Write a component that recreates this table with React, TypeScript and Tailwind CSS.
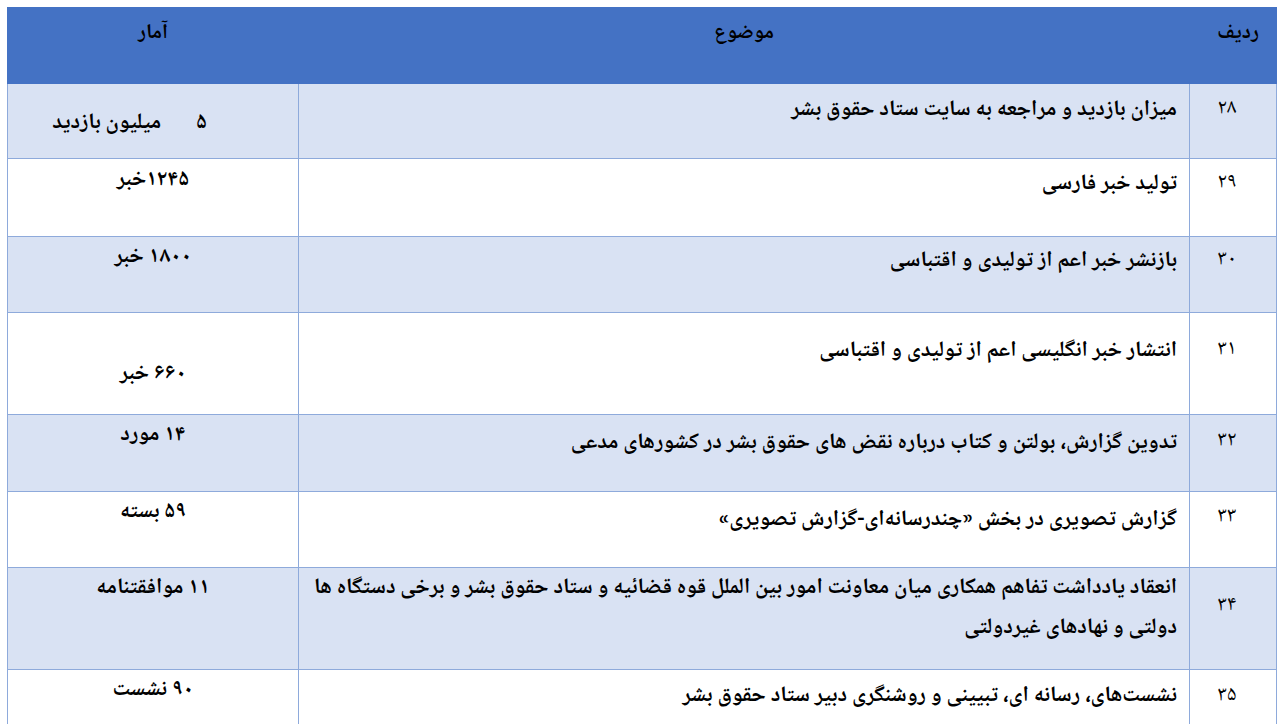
const font = "font-['B_Nazanin','Noto_Naskh_Arabic','Noto_Sans_Arabic','DejaVu_Sans',sans-serif]"

interface Row {
  num: string
  topic: string[]
  stat: string
  h: string
  topicPt: string
  numPt: string
  statPt: string
  shade: boolean
}

const rows: Row[] = [
  { num: '۲۸', topic: ['میزان بازدید و مراجعه به سایت ستاد حقوق بشر'], stat: '', h: 'h-[75px]', topicPt: 'pt-[6px]', numPt: 'pt-[5px]', statPt: 'pt-[19px]', shade: true },
  { num: '۲۹', topic: ['تولید خبر فارسی'], stat: '۱۲۴۵خبر', h: 'h-[78px]', topicPt: 'pt-[5px]', numPt: 'pt-[4px]', statPt: 'pt-[1px]', shade: false },
  { num: '۳۰', topic: ['بازنشر خبر اعم از تولیدی و اقتباسی'], stat: '۱۸۰۰ خبر', h: 'h-[76px]', topicPt: 'pt-[4px]', numPt: 'pt-[3px]', statPt: 'pt-0', shade: true },
  { num: '۳۱', topic: ['انتشار خبر انگلیسی اعم از تولیدی و اقتباسی'], stat: '۶۶۰ خبر', h: 'h-[102px]', topicPt: 'pt-[18px]', numPt: 'pt-[17px]', statPt: 'pt-[41px]', shade: false },
  { num: '۳۲', topic: ['تدوین گزارش، بولتن و کتاب درباره نقض های حقوق بشر در کشورهای مدعی'], stat: '۱۴ مورد', h: 'h-[77px]', topicPt: 'pt-[8px]', numPt: 'pt-[6px]', statPt: 'pt-0', shade: true },
  { num: '۳۳', topic: ['گزارش تصویری در بخش «چندرسانه‌ای-گزارش تصویری»'], stat: '۵۹ بسته', h: 'h-[76px]', topicPt: 'pt-[8px]', numPt: 'pt-[5px]', statPt: 'pt-0', shade: false },
  {
    num: '۳۴',
    topic: ['انعقاد یادداشت تفاهم همکاری میان معاونت امور بین الملل قوه قضائیه و ستاد حقوق بشر و برخی دستگاه ها', 'دولتی و نهادهای غیردولتی'],
    stat: '۱۱ موافقتنامه',
    h: 'h-[102px]',
    topicPt: 'pt-0',
    numPt: 'pt-[18px]',
    statPt: 'pt-0',
    shade: true,
  },
  { num: '۳۵', topic: ['نشست‌های، رسانه ای، تبیینی و روشنگری دبیر ستاد حقوق بشر'], stat: '۹۰ نشست', h: 'h-[80px]', topicPt: 'pt-[6px]', numPt: 'pt-[6px]', statPt: 'pt-0', shade: false },
]

const App: React.FC = () => {
  return (
    <div className={`min-h-screen bg-white pt-[7px] pl-[8px] pr-[6px] text-black ${font}`} dir="rtl">
      <table className="w-[1269px] border-collapse table-fixed">
        <colgroup>
          <col className="w-[87px]" />
          <col className="w-[891px]" />
          <col className="w-[291px]" />
        </colgroup>
        <thead>
          <tr className="h-[76px] bg-[#4472C4]">
            <th className="align-top pt-[6px] pl-[10px] text-center text-[21px] font-bold leading-[40px] border border-[#4472C4]">ردیف</th>
            <th className="align-top pt-[6px] text-center text-[21px] font-bold leading-[40px] border border-[#4472C4]">موضوع</th>
            <th className="align-top pt-[6px] text-center text-[21px] font-bold leading-[40px] border border-[#4472C4]">آمار</th>
          </tr>
        </thead>
        <tbody>
          {rows.map((r) => (
            <tr key={r.num} className={`${r.h} ${r.shade ? 'bg-[#D9E2F3]' : 'bg-white'}`}>
              <td className={`align-top text-center pr-[12px] text-[21px] leading-[40px] border border-[#8EAADB] ${r.numPt}`}>{r.num}</td>
              <td className={`align-top text-right pr-[12px] text-[22px] font-bold leading-[40px] whitespace-nowrap border border-[#8EAADB] ${r.topicPt}`}>
                {r.topic.map((t, i) => (
                  <div key={i}>{t}</div>
                ))}
              </td>
              <td className={`align-top text-[22px] font-bold leading-[40px] border border-[#8EAADB] ${r.statPt} ${r.num === '۲۸' ? 'text-right pr-[91px]' : 'text-center'}`}>
                {r.num === '۲۸' ? (
                  <span>
                    ۵<span className="inline-block w-[35px]" />میلیون بازدید
                  </span>
                ) : (
                  r.stat
                )}
              </td>
            </tr>
          ))}
        </tbody>
      </table>
    </div>
  )
}

export default App
